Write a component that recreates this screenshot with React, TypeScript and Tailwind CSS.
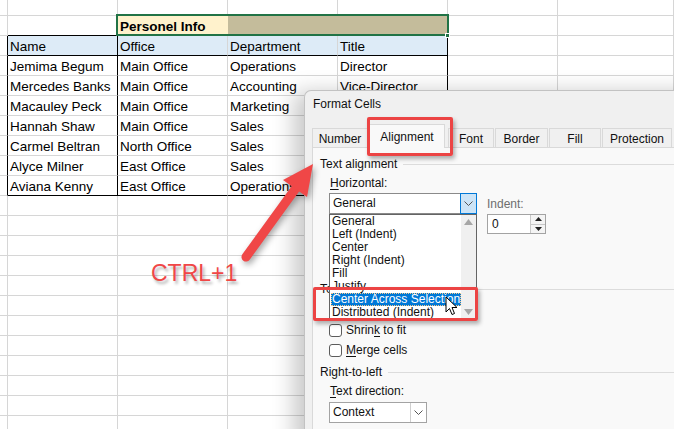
import React from "react";

const sheet: Record<number, string[]> = {
  1: ["", "Personel Info", "", ""],
  2: ["Name", "Office", "Department", "Title"],
  3: ["Jemima Begum", "Main Office", "Operations", "Director"],
  4: ["Mercedes Banks", "Main Office", "Accounting", "Vice-Director"],
  5: ["Macauley Peck", "Main Office", "Marketing", "Coordinator"],
  6: ["Hannah Shaw", "Main Office", "Sales", "Manager"],
  7: ["Carmel Beltran", "North Office", "Sales", "Associate"],
  8: ["Alyce Milner", "East Office", "Sales", "Associate"],
  9: ["Aviana Kenny", "East Office", "Operations", "Analyst"],
};

const listItems = [
  "General",
  "Left (Indent)",
  "Center",
  "Right (Indent)",
  "Fill",
  "Justify",
  "Center Across Selection",
  "Distributed (Indent)",
];

function cellClass(r: number, c: number) {
  const inTable = r >= 2 && r <= 9;
  const inCols = c >= 1 && c <= 4;
  const parts = [
    "h-full shrink-0 border-r border-b overflow-hidden whitespace-nowrap pl-[2px] leading-[22px]",
    c === 0 ? "w-[8px]" : c <= 5 ? "w-[110px]" : "flex-1",
  ];
  if (inTable && (c === 0 || c === 1 || c === 4)) parts.push("border-r-black");
  else if (r === 1 && (c === 2 || c === 3)) parts.push("border-r-transparent");
  else parts.push("border-r-[#d6d6d6]");
  if ((r === 1 || r === 2 || r === 9) && inCols) parts.push("border-b-black");
  else parts.push("border-b-[#d6d6d6]");
  if (r === 1 && c === 2) parts.push("bg-[#fff2cc] font-bold");
  if (r === 1 && (c === 3 || c === 4)) parts.push("bg-[#c4bc9b]");
  if (r === 2 && inCols) parts.push("bg-[#ddebf7]");
  return parts.join(" ");
}

function Sheet() {
  const rows = Array.from({ length: 22 }, (_, i) => i);
  const cols = [0, 1, 2, 3, 4, 5, 6];
  return (
    <div className="flex flex-col text-[13.5px] text-black">
      {rows.map((r) => (
        <div key={r} className={r === 0 ? "flex h-[16px]" : "flex h-[20px]"}>
          {cols.map((c) => (
            <div key={c} className={cellClass(r, c)}>
              {sheet[r] && c >= 1 && c <= 4 ? sheet[r][c - 1] : ""}
            </div>
          ))}
        </div>
      ))}
    </div>
  );
}

function Chevron() {
  return (
    <svg width="9" height="5" viewBox="0 0 9 5" fill="none">
      <path d="M0.5 0.5 L4.5 4.5 L8.5 0.5" stroke="#555" strokeWidth="1" />
    </svg>
  );
}

function Section({ label }: { label: string }) {
  return (
    <div className="flex items-center h-[16px]">
      <span>{label}</span>
      <div className="flex-1 h-px bg-[#dcdcdc] ml-[6px]" />
    </div>
  );
}

function Check({ children }: { children: React.ReactNode }) {
  return (
    <div className="flex items-center h-[14px]">
      <div className="w-[13px] h-[13px] rounded-[3px] border border-[#5c5c5c] bg-white" />
      <span className="ml-[4px]">{children}</span>
    </div>
  );
}

function Tab({ label, active, className }: { label: string; active?: boolean; className: string }) {
  return (
    <div
      className={
        active
          ? `relative z-10 -mb-px h-[24px] border border-b-0 border-[#d9d9d9] bg-[#f9f9f9] pt-[5px] text-center ${className}`
          : `h-[19px] border border-b-0 border-[#d9d9d9] bg-[#f0f0f0] pt-[3px] text-center ${className}`
      }
    >
      {label}
    </div>
  );
}

function FormatCells() {
  return (
    <div className="absolute left-[304px] top-[90px] w-[420px] h-[360px] z-10 rounded-tl-[7px] border-l border-t border-[#c2c2c2] bg-[#f0f0f0] shadow-[-10px_2px_22px_rgba(0,0,0,0.22)] text-[12px] leading-[14px] text-[#111]">
      <div className="pl-[8px] pt-[6px]">Format Cells</div>
      <div className="mt-[12px] flex items-end h-[24px] pl-[7px]">
        <Tab label="Number" className="w-[56px]" />
        <Tab label="Alignment" active className="ml-px w-[76px]" />
        <Tab label="Font" className="ml-[3px] w-[46px]" />
        <Tab label="Border" className="ml-px w-[53px]" />
        <Tab label="Fill" className="ml-px w-[52px]" />
        <Tab label="Protection" className="ml-px w-[70px]" />
      </div>
      <div className="ml-[7px] h-full border-l border-t border-[#d9d9d9] bg-[#f9f9f9] pl-[7px]">
        <div className="mt-[8px]">
          <Section label="Text alignment" />
        </div>
        <div className="pl-[9px]">
          <div className="mt-[4px] pl-px">
            <u className="underline-offset-2">H</u>orizontal:
          </div>
          <div className="mt-[3px] flex items-start">
            <div className="relative z-20 w-[148px]">
              <div className="flex h-[21px] border border-[#8a8a8a] bg-white">
                <div className="flex-1 pl-[3px] leading-[19px]">General</div>
                <div className="-m-px flex w-[17px] items-center justify-center border border-[#0078d7] bg-[#cce4f7]">
                  <Chevron />
                </div>
              </div>
              <div className="absolute left-0 top-full flex w-[148px] border border-[#646464] bg-white">
                <div className="flex-1 flex flex-col">
                  {listItems.map((t) => (
                    <div
                      key={t}
                      className={
                        t === "Center Across Selection"
                          ? "h-[13px] ml-px pl-[1px] leading-[13px] whitespace-nowrap bg-[#0078d7] text-white outline-1 outline-dotted -outline-offset-1 outline-[#f3c98b]"
                          : "h-[13px] pl-[2px] leading-[13px] whitespace-nowrap"
                      }
                    >
                      {t}
                    </div>
                  ))}
                </div>
                <div className="flex w-[15px] flex-col items-center justify-between bg-[#f0f0f0] py-[4px]">
                  <svg width="9" height="6" viewBox="0 0 9 6">
                    <path d="M0 6 L4.5 0 L9 6 Z" fill="#a6a6a6" />
                  </svg>
                  <svg width="9" height="6" viewBox="0 0 9 6">
                    <path d="M0 0 L4.5 6 L9 0 Z" fill="#a6a6a6" />
                  </svg>
                </div>
              </div>
            </div>
            <div className="ml-[10px] mt-[4px]">
              <div className="text-[#6e6e6e]">Indent:</div>
              <div className="mt-[3px] flex h-[20px] w-[59px] border border-[#a3a3a3] bg-white">
                <div className="flex-1 pl-[4px] leading-[18px]">0</div>
                <div className="flex w-[15px] flex-col border-l border-[#c8c8c8] bg-[#f4f4f4]">
                  <div className="flex flex-1 items-center justify-center border-b border-[#c8c8c8]">
                    <svg width="7" height="4" viewBox="0 0 7 4">
                      <path d="M0 4 L3.5 0 L7 4 Z" fill="#222" />
                    </svg>
                  </div>
                  <div className="flex flex-1 items-center justify-center">
                    <svg width="7" height="4" viewBox="0 0 7 4">
                      <path d="M0 0 L3.5 4 L7 0 Z" fill="#222" />
                    </svg>
                  </div>
                </div>
              </div>
            </div>
          </div>
        </div>
        <div className="mt-[47px]">
          <Section label="Text control" />
        </div>
        <div className="flex flex-col gap-[6px] pl-[9px] mt-[6px]">
          <Check>
            <u className="underline-offset-2">W</u>rap text
          </Check>
          <Check>
            Shrin<u className="underline-offset-2">k</u> to fit
          </Check>
          <Check>
            <u className="underline-offset-2">M</u>erge cells
          </Check>
        </div>
        <div className="mt-[7px]">
          <Section label="Right-to-left" />
        </div>
        <div className="pl-[9px]">
          <div className="mt-[4px] pl-px">
            <u className="underline-offset-2">T</u>ext direction:
          </div>
          <div className="mt-[4px] flex h-[21px] w-[98px] border border-[#a3a3a3] bg-white">
            <div className="flex-1 pl-[3px] leading-[19px]">Context</div>
            <div className="flex w-[16px] items-center justify-center border-l border-[#cfcfcf]">
              <Chevron />
            </div>
          </div>
        </div>
      </div>
    </div>
  );
}

export default function App() {
  return (
    <div className="relative h-[429px] w-[674px] overflow-hidden bg-white font-['Liberation_Sans',Arial,sans-serif]">
      <Sheet />

      {/* selection on C2:E2 */}
      <div className="absolute left-[116px] top-[14px] h-[22px] w-[333px] border-2 border-[#217346]" />
      <div className="absolute left-[445px] top-[33px] h-[5px] w-[5px] border border-white bg-[#217346]" />

      <FormatCells />

      {/* callouts */}
      <div className="absolute left-[367px] top-[117px] z-20 h-[39px] w-[86px] rounded-[2px] border-[3px] border-[#ec4444] shadow-[2px_3px_4px_rgba(0,0,0,0.3)]" />
      <div className="absolute left-[313px] top-[287px] z-20 h-[34px] w-[165px] rounded-[2px] border-[3px] border-[#ec4444] shadow-[2px_3px_4px_rgba(0,0,0,0.3)]" />

      <svg className="absolute left-[445px] top-[296px] z-30" width="14" height="21" viewBox="0 0 14 21">
        <path d="M1 1 L1 16 L4.5 12.5 L7 18.5 L9.5 17.5 L7 11.5 L12 11.5 Z" fill="#fff" stroke="#000" strokeWidth="1" strokeLinejoin="round" />
      </svg>

      <svg
        className="pointer-events-none absolute left-0 top-0 z-30 drop-shadow-[2px_3px_3px_rgba(0,0,0,0.35)]"
        width="674"
        height="429"
        viewBox="0 0 674 429"
      >
        <line x1="246" y1="257" x2="296" y2="188" stroke="#f04747" strokeWidth="9" strokeLinecap="round" />
        <polygon points="313,164 283,180 307,197" fill="#f04747" />
      </svg>

      <div className="absolute left-[151px] top-[262px] z-30 text-[23px] leading-none text-[#f04747] [text-shadow:2px_3px_3px_rgba(0,0,0,0.3)]">
        CTRL+1
      </div>
    </div>
  );
}
